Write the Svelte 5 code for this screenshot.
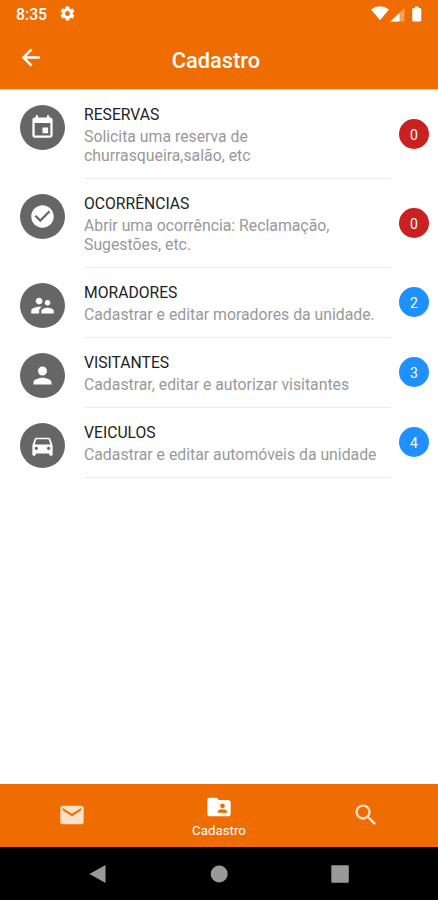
<script lang="ts">
  type Item = {
    title: string;
    lines: string[];
    count: number;
    icon: string;
  };

  const items: Item[] = [
    {
      title: "RESERVAS",
      lines: ["Solicita uma reserva de", "churrasqueira,salão, etc"],
      count: 0,
      icon: "M17 12h-5v5h5v-5zM16 1v2H8V1H6v2H5c-1.11 0-1.99.9-1.99 2L3 19c0 1.1.89 2 2 2h14c1.1 0 2-.9 2-2V5c0-1.1-.9-2-2-2h-1V1h-2zm3 18H5V8h14v11z",
    },
    {
      title: "OCORRÊNCIAS",
      lines: ["Abrir uma ocorrência: Reclamação,", "Sugestões, etc."],
      count: 0,
      icon: "M12 2C6.48 2 2 6.48 2 12s4.48 10 10 10 10-4.48 10-10S17.52 2 12 2zm-2 15l-5-5 1.41-1.41L10 14.17l7.59-7.59L19 8l-9 9z",
    },
    {
      title: "MORADORES",
      lines: ["Cadastrar e editar moradores da unidade."],
      count: 2,
      icon: "M16.5 12c1.38 0 2.49-1.12 2.49-2.5S17.88 7 16.5 7C15.12 7 14 8.12 14 9.5s1.12 2.5 2.5 2.5zM9 11c1.66 0 2.99-1.34 2.99-3S10.66 5 9 5C7.34 5 6 6.34 6 8s1.34 3 3 3zm7.5 3c-1.83 0-5.5.92-5.5 2.75V19h11v-2.25c0-1.83-3.67-2.75-5.5-2.75zM9 13c-2.33 0-7 1.17-7 3.5V19h7v-2.25c0-.85.33-2.34 2.37-3.47C10.5 13.1 9.66 13 9 13z",
    },
    {
      title: "VISITANTES",
      lines: ["Cadastrar, editar e autorizar visitantes"],
      count: 3,
      icon: "M12 12c2.21 0 4-1.79 4-4s-1.79-4-4-4-4 1.79-4 4 1.79 4 4 4zm0 2c-2.67 0-8 1.34-8 4v2h16v-2c0-2.66-5.33-4-8-4z",
    },
    {
      title: "VEICULOS",
      lines: ["Cadastrar e editar automóveis da unidade"],
      count: 4,
      icon: "M18.92 6.01C18.72 5.42 18.16 5 17.5 5h-11c-.66 0-1.21.42-1.42 1.01L3 12v8c0 .55.45 1 1 1h1c.55 0 1-.45 1-1v-1h12v1c0 .55.45 1 1 1h1c.55 0 1-.45 1-1v-8l-2.08-5.99zM6.5 16c-.83 0-1.5-.67-1.5-1.5S5.67 13 6.5 13s1.5.67 1.5 1.5S7.33 16 6.5 16zm11 0c-.83 0-1.5-.67-1.5-1.5s.67-1.5 1.5-1.5 1.5.67 1.5 1.5-.67 1.5-1.5 1.5zM5 11l1.5-4.5h11L19 11H5z",
    },
  ];
</script>

<div class="screen">
  <div class="status">
    <span class="clock">8:35</span>
    <svg class="gear" viewBox="0 0 24 24" width="17" height="17">
      <path d="M19.43 12.98c.04-.32.07-.64.07-.98s-.03-.66-.07-.98l2.11-1.65c.19-.15.24-.42.12-.64l-2-3.46c-.12-.22-.39-.3-.61-.22l-2.49 1c-.52-.4-1.08-.73-1.69-.98l-.38-2.65C14.46 2.18 14.25 2 14 2h-4c-.25 0-.46.18-.49.42l-.38 2.65c-.61.25-1.17.59-1.69.98l-2.49-1c-.23-.09-.49 0-.61.22l-2 3.46c-.13.22-.07.49.12.64l2.11 1.65c-.04.32-.07.65-.07.98s.03.66.07.98l-2.11 1.65c-.19.15-.24.42-.12.64l2 3.46c.12.22.39.3.61.22l2.49-1c.52.4 1.08.73 1.69.98l.38 2.65c.03.24.24.42.49.42h4c.25 0 .46-.18.49-.42l.38-2.65c.61-.25 1.17-.59 1.69-.98l2.49 1c.23.09.49 0 .61-.22l2-3.46c.12-.22.07-.49-.12-.64l-2.11-1.65zM12 15.5c-1.93 0-3.5-1.57-3.5-3.5s1.57-3.5 3.5-3.5 3.5 1.57 3.5 3.5-1.57 3.5-3.5 3.5z" />
    </svg>
    <svg class="signals" viewBox="0 0 52 16" width="52" height="16">
      <path d="M0 3.5Q9-3.2 18 3.5L9 14.3z" />
      <path d="M33.5 2v13.5H19.5z" opacity=".35" />
      <path d="M28.5 7v8.5H19.5z" />
      <path d="M44 .5h3.5V2H49q1.3 0 1.3 1.3v11q0 1.3-1.3 1.3h-6.5q-1.3 0-1.300-1.300v-11Q41.200 2 42.500 2H44z" />
    </svg>
  </div>

  <header>
    <svg class="back" viewBox="0 0 24 24" width="27" height="27">
      <path d="M19.5 12h-14M12 4.800L4.800 12l7.200 7.200" />
    </svg>
    <h1>Cadastro</h1>
  </header>

  <main>
    {#each items as item}
      <div class="item">
        <div class="avatar">
          <svg viewBox="0 0 24 24" width="27" height="27"><path d={item.icon} /></svg>
        </div>
        <div class="content">
          <h2>{item.title}</h2>
          {#each item.lines as line}
            <p>{line}</p>
          {/each}
        </div>
        <span class="badge" class:empty={item.count === 0}>{item.count}</span>
      </div>
    {/each}
  </main>

  <nav class="tabs">
    <div class="tab">
      <svg viewBox="0 0 24 24" width="28" height="28">
        <path d="M20 4H4c-1.1 0-1.99.9-1.99 2L2 18c0 1.1.9 2 2 2h16c1.1 0 2-.9 2-2V6c0-1.1-.9-2-2-2zm0 4l-8 5-8-5V6l8 5 8-5v2z" />
      </svg>
    </div>
    <div class="tab active">
      <svg viewBox="0 0 24 24" width="28" height="28">
        <path d="M20 6h-8l-2-2H4c-1.1 0-1.99.9-1.99 2L2 18c0 1.1.9 2 2 2h16c1.1 0 2-.9 2-2V8c0-1.1-.9-2-2-2zm-5 3c1.1 0 2 .9 2 2s-.9 2-2 2-2-.9-2-2 .9-2 2-2zm4 8h-8v-1c0-1.33 2.67-2 4-2s4 .67 4 2v1z" />
      </svg>
      <span>Cadastro</span>
    </div>
    <div class="tab">
      <svg viewBox="0 0 24 24" width="28" height="28">
        <path d="M15.5 14h-.79l-.28-.27C15.41 12.59 16 11.11 16 9.5 16 5.91 13.09 3 9.5 3S3 5.91 3 9.5 5.91 16 9.5 16c1.61 0 3.09-.59 4.23-1.57l.27.28v.79l5 4.99L20.49 19l-4.99-5zm-6 0C7.01 14 5 11.99 5 9.5S7.01 5 9.5 5 14 7.01 14 9.5 11.99 14 9.5 14z" />
      </svg>
    </div>
  </nav>

  <div class="system">
    <svg viewBox="0 0 18 20" width="18" height="20"><path d="M16.5 1v18L.5 10z" /></svg>
    <svg viewBox="0 0 18 20" width="18" height="20"><circle cx="9.2" cy="10" r="8.5" /></svg>
    <svg viewBox="0 0 18 20" width="18" height="20"><rect x=".3" y="1.2" width="17.5" height="17.5" rx="1" /></svg>
  </div>
</div>

<style>
  :global(body) {
    margin: 0;
    font-family: Roboto, "Liberation Sans", sans-serif;
  }

  .screen {
    display: flex;
    flex-direction: column;
    width: 438px;
    height: 900px;
    overflow: hidden;
    background: #fff;
  }

  svg {
    display: block;
    flex: none;
    fill: currentColor;
  }

  .status {
    display: flex;
    align-items: center;
    height: 28px;
    box-sizing: border-box;
    padding: 0 15px 0 16px;
    background: #ef6c00;
    color: #fff;
  }

  .clock {
    margin-top: 1px;
    font-size: 15.8px;
    font-weight: 500;
    line-height: 29px;
  }

  .gear {
    margin: -1px 0 0 11.5px;
  }

  .signals {
    margin-left: auto;
  }

  header {
    display: grid;
    grid-template-columns: 60px 1fr 66px;
    align-items: center;
    height: 61px;
    background: #ef6c00;
    color: #fff;
    border-bottom: 1px solid #fbd3b3;
  }

  .back {
    margin: -3px 0 0 18px;
    fill: none;
    stroke: #fff;
    stroke-width: 2.2;
  }

  h1 {
    margin: 4px 0 0;
    font-size: 21.8px;
    font-weight: 500;
    line-height: 30px;
    text-align: center;
  }

  main {
    flex: 1;
  }

  .item {
    display: grid;
    grid-template-columns: 64px 307px 38px;
    padding-left: 20px;
  }

  .avatar {
    display: flex;
    align-items: center;
    justify-content: center;
    width: 45px;
    height: 45px;
    margin-top: 15px;
    border-radius: 50%;
    background: #666;
    color: #fff;
  }

  .content {
    padding: 15.4px 0 12px;
    border-bottom: 1px solid #ebebeb;
  }

  h2 {
    margin: 0 0 3px;
    font-size: 15.7px;
    font-weight: 400;
    line-height: 20px;
    color: #222;
    white-space: nowrap;
  }

  p {
    margin: 0;
    font-size: 15.8px;
    line-height: 18.7px;
    color: #999;
    white-space: nowrap;
  }

  .badge {
    align-self: center;
    width: 30px;
    height: 30px;
    margin: -1px 0 0 8px;
    border-radius: 50%;
    background: #1e90ff;
    color: #fff;
    font-size: 14px;
    line-height: 32px;
    text-align: center;
  }

  .badge.empty {
    background: #c92020;
  }

  .tabs {
    display: grid;
    grid-template-columns: repeat(3, 147px);
    justify-content: center;
    height: 63px;
    background: #ef6c00;
  }

  .tab {
    display: flex;
    flex-direction: column;
    align-items: center;
    justify-content: center;
    padding-bottom: 1px;
    color: #fce0c8;
    font-size: 13.3px;
  }

  .tab.active {
    padding: 1px 0 0;
    color: #fff;
  }

  .tab span {
    margin-top: 2px;
    line-height: 16px;
  }

  .system {
    display: flex;
    align-items: center;
    justify-content: center;
    gap: 103px;
    height: 53px;
    background: #000;
    color: #999;
  }
</style>
